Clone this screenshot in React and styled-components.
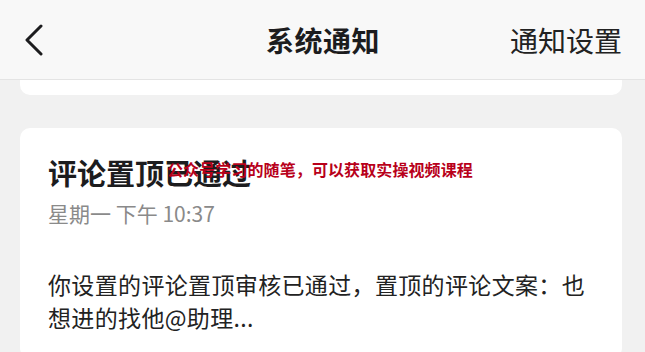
import React from "react";
import styled, { createGlobalStyle } from "styled-components";

const GlobalStyle = createGlobalStyle`
  html, body {
    margin: 0;
    padding: 0;
    background: #f1f1f1;
    font-family: "Noto Sans CJK SC", "Noto Sans", sans-serif;
  }
`;

const Page = styled.div`
  position: relative;
  width: 645px;
  height: 352px;
  overflow: hidden;
  background: #f1f1f1;
`;

const Header = styled.header`
  height: 80px;
  box-sizing: border-box;
  display: grid;
  grid-template-columns: 1fr auto 1fr;
  align-items: center;
  padding: 0 23px 0 24px;
  background: #f8f8f8;
  border-bottom: 1px solid #e4e4e4;
`;

const BackButton = styled.button`
  justify-self: start;
  background: none;
  border: none;
  padding: 0;
  display: flex;
  cursor: pointer;
`;

const Title = styled.h1`
  margin: 0;
  font-size: 28px;
  font-weight: 700;
  color: #1c1c1e;
  letter-spacing: 0.5px;
`;

const SettingsLink = styled.span`
  justify-self: end;
  font-size: 28px;
  color: #222;
`;

const List = styled.div`
  display: flex;
  flex-direction: column;
  gap: 33px;
  padding: 0 23px 0 20px;
`;

const Card = styled.div`
  position: relative;
  background: #fff;
  border-radius: ${(p) => (p.$clipped ? "0 0 10px 10px" : "10px")};
  height: ${(p) => (p.$clipped ? "15px" : "auto")};
  padding: ${(p) => (p.$clipped ? "0" : "25px 28px 24px")};
`;

const CardTitle = styled.h2`
  margin: 0;
  font-size: 29px;
  line-height: 38px;
  font-weight: 700;
  color: #1c1c1e;
`;

const Time = styled.div`
  margin-top: 8px;
  font-size: 21px;
  line-height: 29px;
  color: #8a8a8a;
`;

const Body = styled.p`
  margin: 40px 0 0;
  font-size: 23px;
  line-height: 33px;
  letter-spacing: 0.35px;
  color: #222;
`;

const Watermark = styled.div`
  position: absolute;
  left: 147px;
  top: 29px;
  font-size: 16px;
  font-weight: 700;
  color: #b8001a;
  white-space: nowrap;
  letter-spacing: 0.1px;
`;

const ChevronLeft = () => (
  <svg width="20" height="32" viewBox="0 0 20 32" fill="none">
    <path
      d="M17 2 L3 16 L17 30"
      stroke="#1c1c1e"
      strokeWidth="3"
      strokeLinecap="round"
      strokeLinejoin="round"
    />
  </svg>
);

export default function App() {
  return (
    <Page>
      <GlobalStyle />
      <Header>
        <BackButton>
          <ChevronLeft />
        </BackButton>
        <Title>系统通知</Title>
        <SettingsLink>通知设置</SettingsLink>
      </Header>
      <List>
        <Card $clipped />
        <Card>
          <CardTitle>评论置顶已通过</CardTitle>
          <Time>星期一 下午 10:37</Time>
          <Body>
            你设置的评论置顶审核已通过，置顶的评论文案：也想进的找他@助理...
          </Body>
          <Watermark>公众号学习的随笔，可以获取实操视频课程</Watermark>
        </Card>
      </List>
    </Page>
  );
}
